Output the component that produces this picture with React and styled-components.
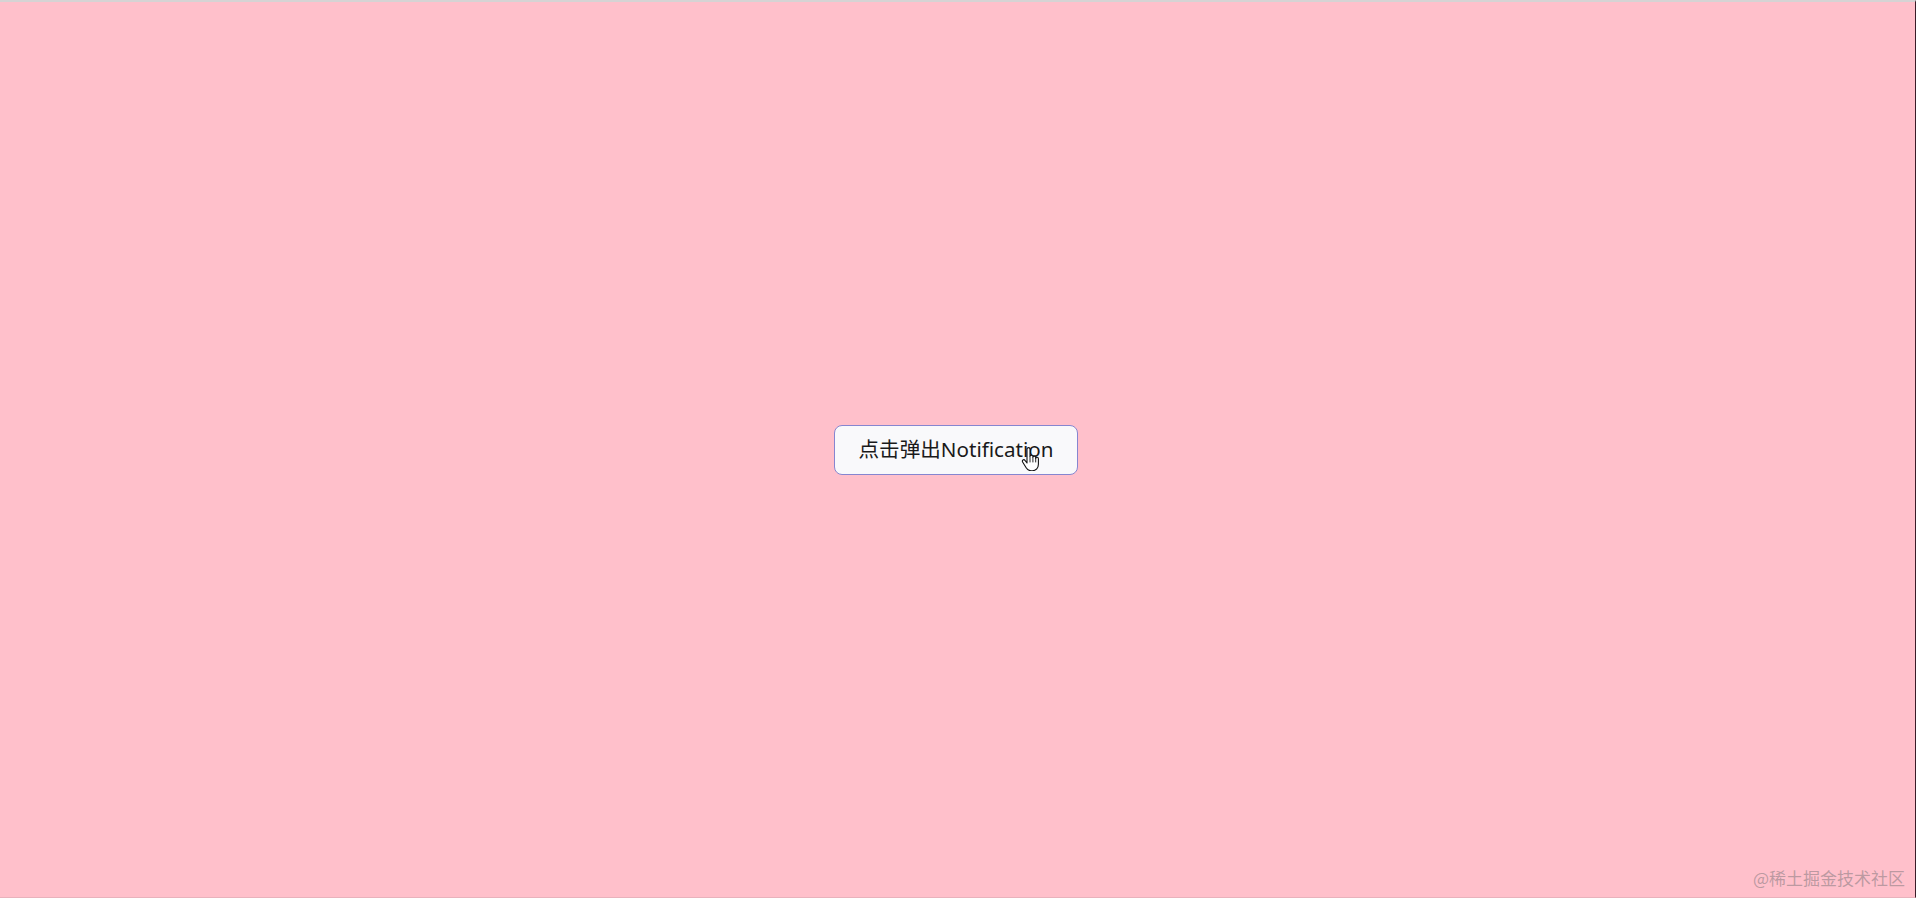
import React from "react";
import styled, { createGlobalStyle } from "styled-components";

const GlobalStyle = createGlobalStyle`
  html, body {
    margin: 0;
    padding: 0;
    height: 100%;
  }
  body {
    font-family: "Noto Sans", "Noto Sans CJK SC", sans-serif;
    overflow: hidden;
  }
`;

const Page = styled.div`
  position: relative;
  box-sizing: border-box;
  width: 100vw;
  height: 100vh;
  background: #ffc0cb;
  border-top: 2px solid #d6d3d4;
  border-right: 1px solid #3a1c28;
  border-bottom: 1px solid #e8b2bc;
  display: flex;
  align-items: center;
  justify-content: center;
`;

const TriggerButton = styled.button`
  position: relative;
  box-sizing: border-box;
  height: 50px;
  padding: 0 23px;
  margin-left: -3px;
  background: #f9f9fb;
  border: 1px solid #8686d0;
  border-radius: 8px;
  color: #1a1a1a;
  font-family: "Noto Sans", "Noto Sans CJK SC", sans-serif;
  font-size: 20.6px;
  line-height: 1;
  cursor: pointer;
`;

const Pointer = styled.svg`
  position: absolute;
  left: 186px;
  top: 21px;
  width: 19px;
  height: 24px;
  pointer-events: none;
`;

const Watermark = styled.span`
  position: absolute;
  right: 10px;
  bottom: 7px;
  font-family: "Noto Sans CJK SC", sans-serif;
  font-size: 17px;
  color: rgba(130, 120, 125, 0.55);
`;

function HandCursor() {
  return (
    <Pointer viewBox="0 0 19 24">
      <path
        d="M6 2.2c0-1 .7-1.6 1.5-1.6S9 1.2 9 2.2v7.2c.2-.8.8-1.2 1.5-1.2.8 0 1.4.6 1.4 1.4v.6c.2-.7.8-1.1 1.4-1.1.8 0 1.4.6 1.4 1.4v.8c.2-.6.7-1 1.3-1 .8 0 1.4.6 1.4 1.5v5.5c0 3.6-2.4 6.4-6 6.4H10c-2 0-3.4-.8-4.5-2.4L1.6 15c-.5-.8-.3-1.7.4-2.1.7-.4 1.5-.2 2 .5L6 16V2.2z"
        fill="#fff"
        stroke="#111"
        strokeWidth="1.1"
        strokeLinejoin="round"
      />
      <path d="M9 10v5M11.9 10.6v4.4M14.7 11.3v3.7" stroke="#111" strokeWidth="0.9" strokeLinecap="round" />
    </Pointer>
  );
}

export default function App() {
  return (
    <>
      <GlobalStyle />
      <Page>
        <TriggerButton>
          点击弹出Notification
          <HandCursor />
        </TriggerButton>
        <Watermark>@稀土掘金技术社区</Watermark>
      </Page>
    </>
  );
}
